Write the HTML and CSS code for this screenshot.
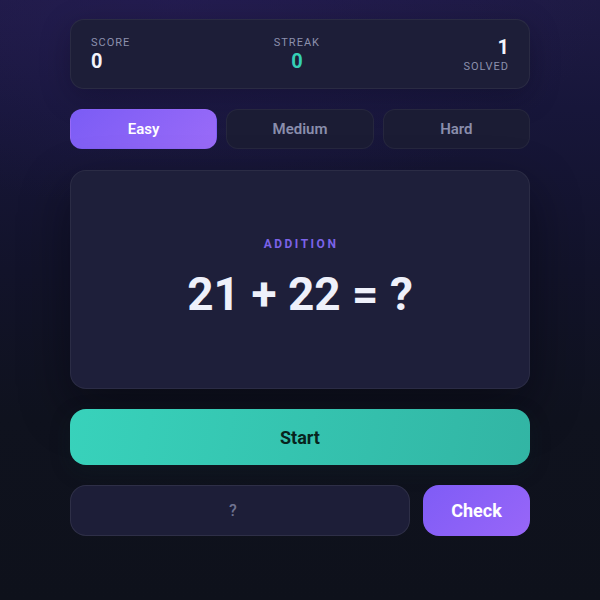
FILE: index.html
```html
<!DOCTYPE html>
<html lang="en">
<head>
<meta charset="utf-8">
<title>Math Quiz</title>
<link rel="stylesheet" href="styles.css">
</head>
<body>
<main class="app">
  <section class="stats">
    <div class="stat stat-left">
      <span class="stat-label">Score</span>
      <span class="stat-value">0</span>
    </div>
    <div class="stat stat-center">
      <span class="stat-label">Streak</span>
      <span class="stat-value teal">0</span>
    </div>
    <div class="stat stat-right">
      <span class="stat-label">Solved</span>
      <span class="stat-value">1</span>
    </div>
  </section>

  <nav class="levels">
    <button class="level active">Easy</button>
    <button class="level">Medium</button>
    <button class="level">Hard</button>
  </nav>

  <section class="problem">
    <div class="op">Addition</div>
    <div class="equation">21 + 22 = ?</div>
  </section>

  <button class="start">Start</button>

  <div class="answer-row">
    <input class="answer" type="text" placeholder="?">
    <button class="check">Check</button>
  </div>
</main>
</body>
</html>
```

FILE: styles.css
```css
* { box-sizing: border-box; }
html, body { height: 100%; }
body {
  margin: 0;
  font-family: Roboto, "Noto Sans", sans-serif;
  color: #eef0fa;
  background:
    radial-gradient(ellipse 70% 35% at 30% 0%, rgba(40, 30, 90, 0.55), rgba(40, 30, 90, 0) 100%),
    linear-gradient(180deg, #1e1a44 0%, #17163a 18%, #12132a 45%, #0f121e 70%, #0e111b 100%);
  min-height: 600px;
}
.app {
  width: 460px;
  margin: 0 auto;
  padding-top: 19px;
  display: flex;
  flex-direction: column;
}
.stats {
  height: 70px;
  background: #1d1e38;
  border: 1px solid rgba(255, 255, 255, 0.06);
  border-radius: 14px;
  padding: 0 20px;
  display: flex;
  justify-content: space-between;
  align-items: center;
  box-shadow: 0 8px 30px rgba(5, 5, 15, 0.25);
}
.stat { display: flex; flex-direction: column; }
.stat-left { align-items: flex-start; }
.stat-center { align-items: center; }
.stat-right { align-items: flex-end; flex-direction: column-reverse; }
.stat-label {
  font-size: 11px;
  letter-spacing: 1px;
  text-transform: uppercase;
  color: #8c90ad;
  line-height: 13px;
}
.stat-value {
  font-size: 20px;
  font-weight: 700;
  line-height: 24px;
  color: #f3f4fb;
}
.stat-right .stat-label { margin-top: 1px; }
.stat-value.teal { color: #35cfb5; }

.levels {
  margin-top: 20px;
  display: grid;
  grid-template-columns: repeat(3, 1fr);
  gap: 9px;
}
.level {
  height: 40px;
  border-radius: 12px;
  border: 1px solid rgba(255, 255, 255, 0.05);
  background: #1b1c34;
  color: #8a8eac;
  font-family: inherit;
  font-size: 15px;
  font-weight: 600;
}
.level.active {
  background: linear-gradient(135deg, #7b5cf5, #9a6bf8);
  border-color: transparent;
  color: #ffffff;
}

.problem {
  margin-top: 21px;
  height: 219px;
  padding-bottom: 2px;
  background: #1e1f3a;
  border: 1px solid rgba(255, 255, 255, 0.06);
  border-radius: 16px;
  display: flex;
  flex-direction: column;
  align-items: center;
  justify-content: center;
  box-shadow: 0 20px 50px rgba(4, 4, 12, 0.45);
}
.op {
  font-size: 12px;
  font-weight: 700;
  letter-spacing: 2.5px;
  text-transform: uppercase;
  color: #7b63e8;
  margin-left: 2px;
  line-height: 14px;
}
.equation {
  margin-top: 16px;
  font-size: 46px;
  font-weight: 700;
  color: #eef0fa;
  line-height: 54px;
}

.start {
  margin-top: 20px;
  height: 56px;
  border: none;
  border-radius: 16px;
  background: linear-gradient(100deg, #38d2bb, #32b5a4);
  color: #08241d;
  font-family: inherit;
  font-size: 18px;
  font-weight: 700;
  box-shadow: 0 6px 20px rgba(10, 40, 40, 0.25);
}

.answer-row {
  margin-top: 20px;
  display: flex;
  gap: 13px;
}
.answer {
  flex: 1;
  height: 51px;
  border-radius: 16px;
  border: 1px solid rgba(255, 255, 255, 0.08);
  background: #1d1e38;
  color: #eef0fa;
  text-align: center;
  padding: 0 14px 0 0;
  font-family: inherit;
  font-size: 16px;
  font-weight: 500;
  outline: none;
}
.answer::placeholder { color: #6f7290; }
.check {
  width: 107px;
  height: 51px;
  border: none;
  border-radius: 16px;
  background: linear-gradient(135deg, #7f5cf6, #9866f8);
  color: #ffffff;
  font-family: inherit;
  font-size: 18px;
  font-weight: 700;
}
```
